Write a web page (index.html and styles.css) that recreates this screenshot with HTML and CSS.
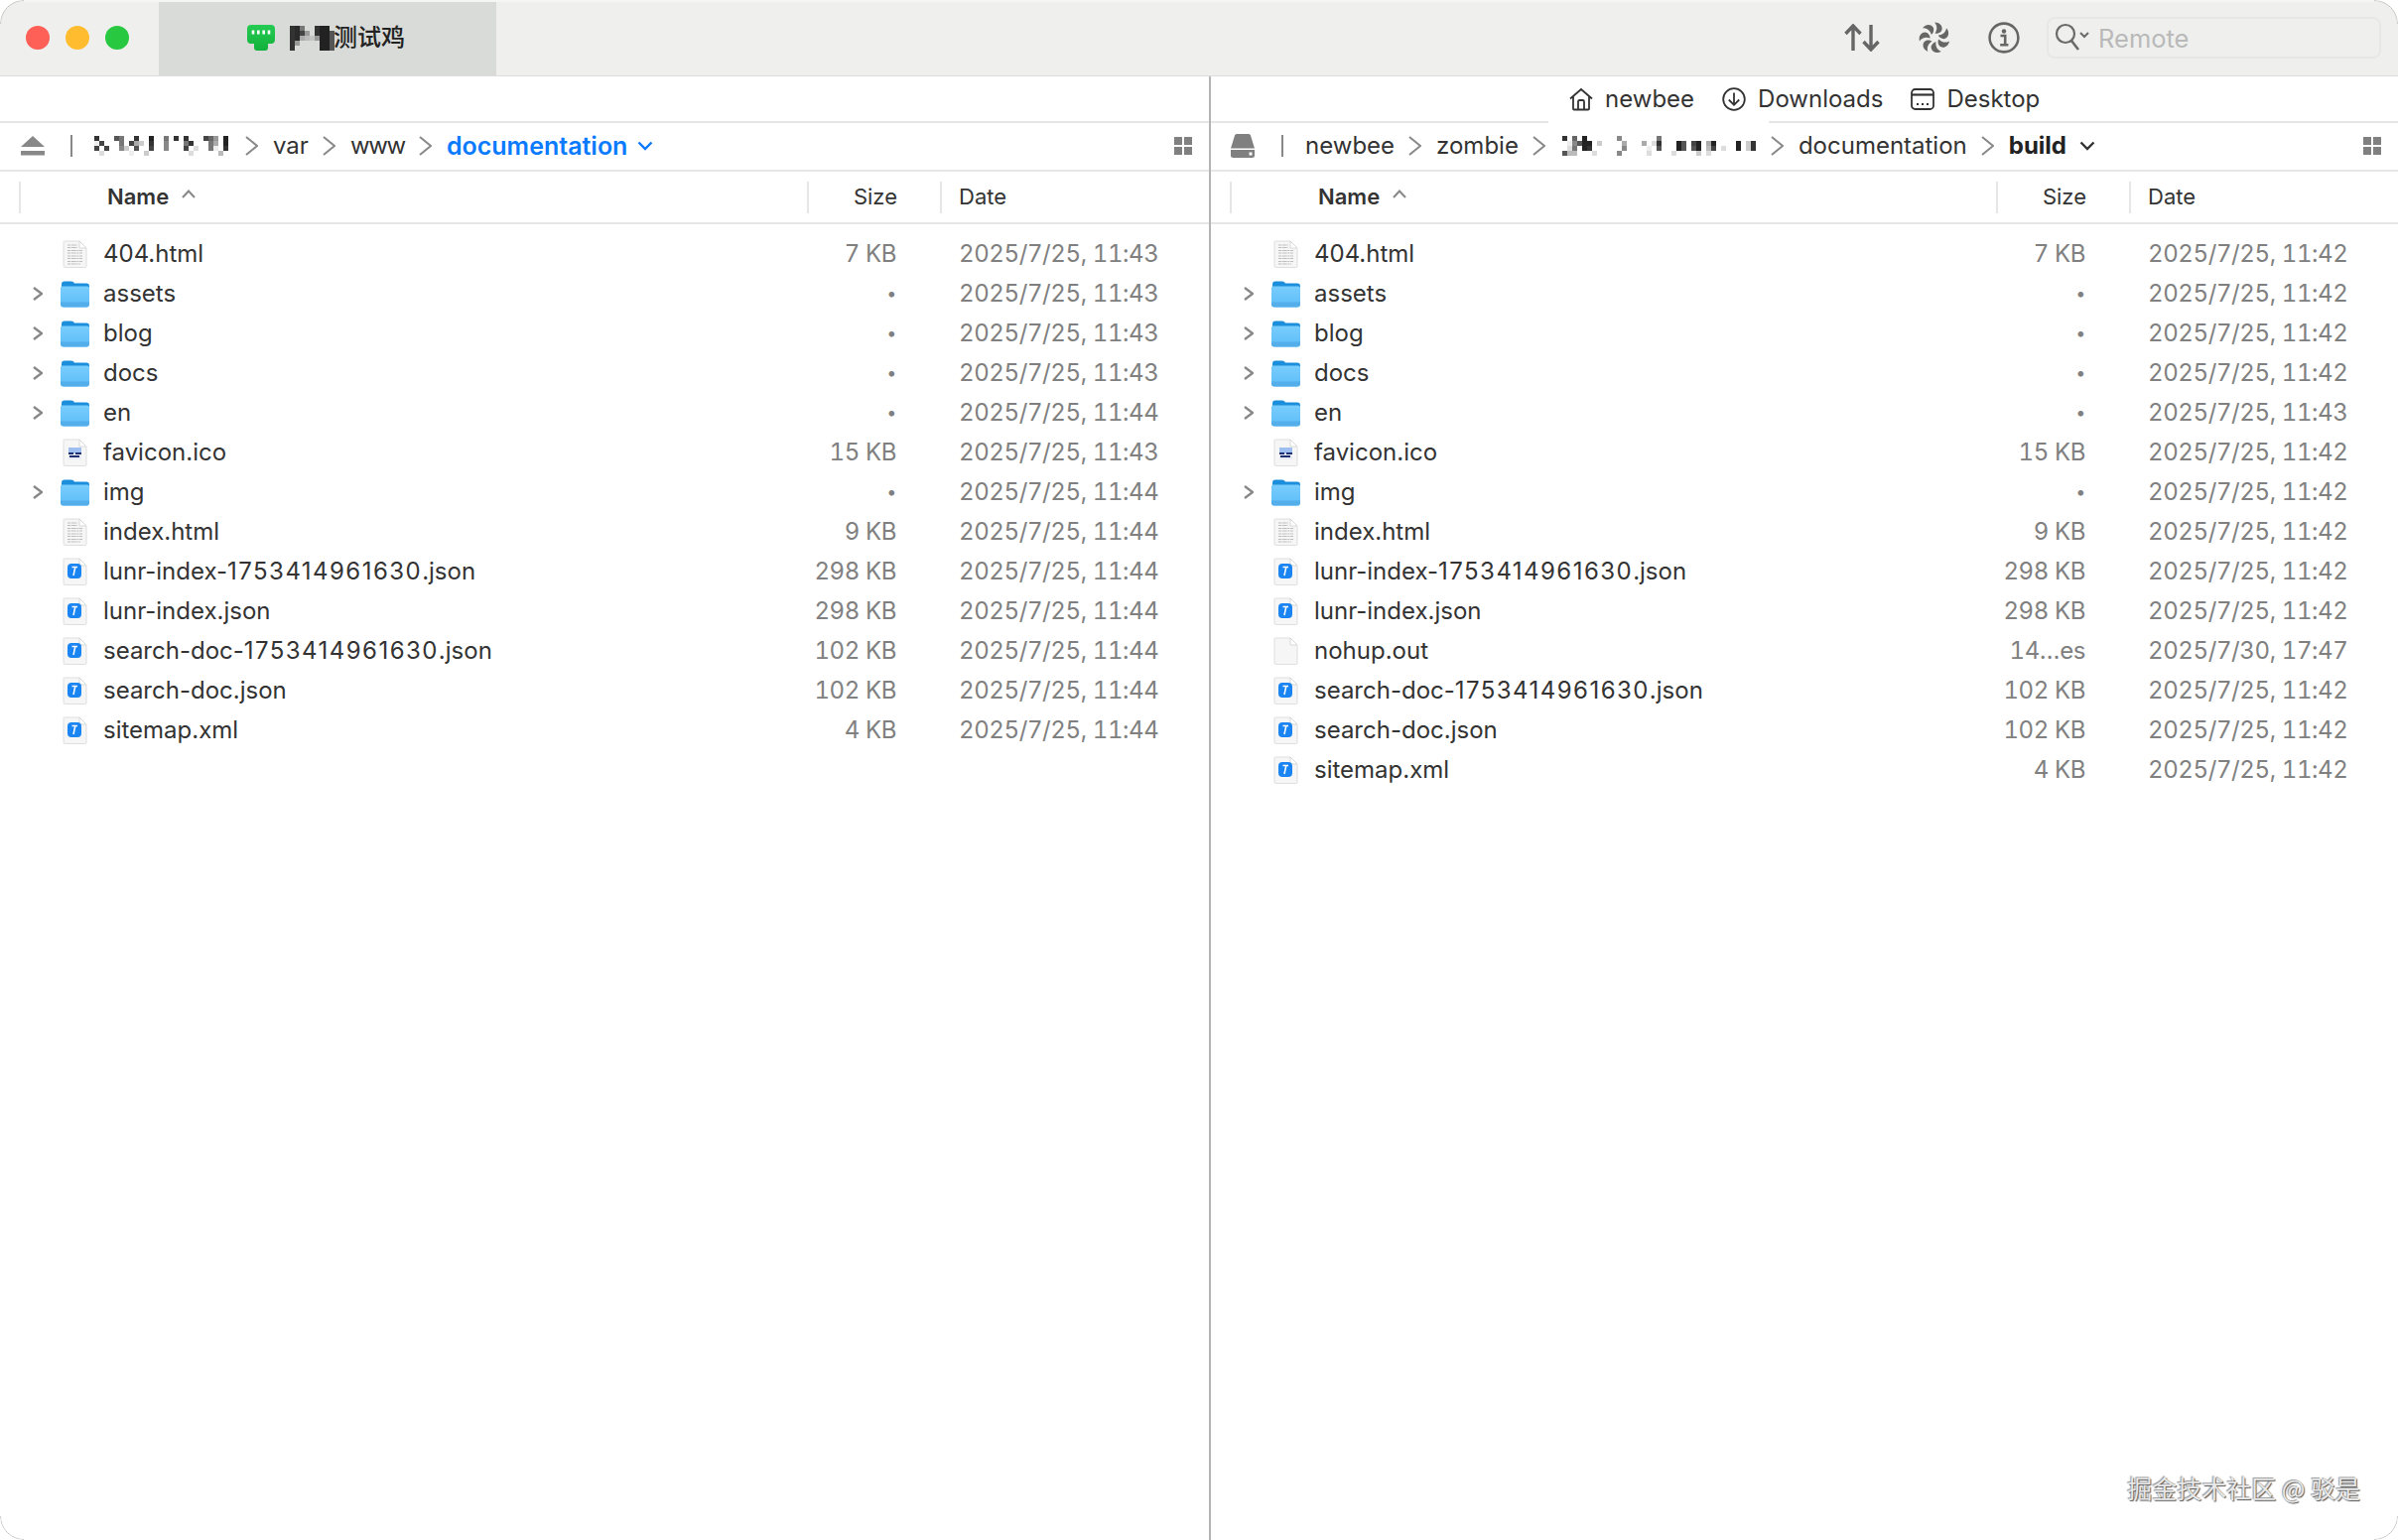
FILE: index.html
```html
<!DOCTYPE html>
<html lang="en">
<head>
<meta charset="utf-8">
<title>Transmit</title>
<link rel="stylesheet" href="styles.css">
</head>
<body>
<svg class="defs" aria-hidden="true">
  <defs>
    <linearGradient id="fb" x1="0" y1="0" x2="0" y2="1"><stop offset="0" stop-color="#79cdfd"/><stop offset="1" stop-color="#5cbcf8"/></linearGradient>
    <linearGradient id="gr" x1="0" y1="0" x2="0" y2="1"><stop offset="0" stop-color="#25cb52"/><stop offset="1" stop-color="#12b03c"/></linearGradient>
  </defs>
  <symbol id="chev" viewBox="0 0 10 14"><path d="M1 1 L9 7 L1 13" fill="none" stroke="#888" stroke-width="2.4"/></symbol>
  <symbol id="folder" viewBox="0 0 29 27">
    <path d="M1 4 Q1 1 4 1 H11 Q13 1 14 3 H26 Q29 3 29 6 V12 H1Z" fill="#1c8fdc"/>
    <path d="M0 7.5 Q0 6 2 6 H27 Q29 6 29 7.5 V24 Q29 27 26 27 H3 Q0 27 0 24Z" fill="url(#fb)"/>
    <path d="M0 22 H29 V24 Q29 27 26 27 H3 Q0 27 0 24Z" fill="#53aeea"/>
  </symbol>
  <symbol id="page" viewBox="0 0 25 28">
    <path d="M1.5 1 H17 L24 8 V26 Q24 27.5 22.5 27.5 H2.5 Q1 27.5 1 26 V1.5Z" fill="#f6f6f6" stroke="#dedede" stroke-width="1"/>
    <path d="M17 1 V8 H24Z" fill="#fff" stroke="#d8d8d8" stroke-width="1"/>
  </symbol>
  <symbol id="doc" viewBox="0 0 25 28">
    <use href="#page" width="25" height="28"/>
    <path d="M5 5 H15 M5 7.5 H15 M5 10.5 H20 M5 13 H20 M5 16 H20 M5 18.5 H20 M5 21.5 H20 M5 24 H18" stroke="#bdbdbd" stroke-width="1.2" stroke-dasharray="3 .7 5 .7 2 .7 4 .7"/>
  </symbol>
  <symbol id="ico" viewBox="0 0 25 28">
    <use href="#page" width="25" height="28"/>
    <rect x="6" y="9" width="13" height="6" fill="#9fbff0"/>
    <rect x="6" y="15" width="13" height="6" fill="#e9edf8"/>
    <path d="M6 15 H11 M13 15 H19 M7 18 H17" stroke="#1f2f70" stroke-width="2"/>
  </symbol>
  <symbol id="json" viewBox="0 0 25 28">
    <use href="#page" width="25" height="28"/>
    <rect x="5" y="6" width="14" height="15" rx="4" fill="#1b84f3"/>
    <path d="M9.5 9.5 H15 M12.8 9.5 L11 18" stroke="#fff" stroke-width="1.5" fill="none"/>
  </symbol>
  <symbol id="eject" viewBox="0 0 24 20"><path d="M12 0 L24 11 H0Z" fill="#888"/><rect y="15" width="24" height="4.5" fill="#888"/></symbol>
  <symbol id="drive" viewBox="0 0 24 24">
    <path d="M4 1.5 Q4.3 0 6 0 H18 Q19.7 0 20 1.5 L24 14.5 H0Z" fill="#808080"/>
    <path d="M0 16 H24 V21.5 Q24 24 21.5 24 H2.5 Q0 24 0 21.5Z" fill="#808080"/>
    <rect x="18.5" y="18.5" width="3" height="3" fill="#fff"/>
  </symbol>
  <symbol id="grid" viewBox="0 0 18 18"><path d="M0 0h8v8H0zM10 0h8v8h-8zM0 10h8v8H0zM10 10h8v8h-8z" fill="#808080"/></symbol>
  <symbol id="blade" viewBox="-16 -16 32 32"><path d="M0.5 -4.5 C3 -8 3 -12 0 -15.5 C5 -15.5 8.5 -12 7.5 -8 C7 -5.5 3 -3.5 0.5 -4.5Z" fill="#666"/></symbol>
</svg>

<div class="window">
  <header class="titlebar">
    <div class="lights"><span class="light red"></span><span class="light yellow"></span><span class="light green"></span></div>
    <div class="tab">
      <svg class="plug" viewBox="0 0 28 26"><path d="M4 0 H24 Q28 0 28 4 V15 Q28 19 24 19 H21 V23 Q21 26 18 26 H10 Q7 26 7 23 V19 H4 Q0 19 0 15 V4 Q0 0 4 0Z" fill="url(#gr)"/><path d="M6 5.5 V9.5 M11.3 5.5 V9.5 M16.7 5.5 V9.5 M22 5.5 V9.5" stroke="#fff" stroke-width="2.6"/></svg>
      <svg class="title-mosaic" viewBox="0 0 9 5" shape-rendering="crispEdges">
        <rect x="0" y="0" width="1" height="5" fill="#333"/><rect x="1" y="0" width="1" height="3" fill="#2a2a2a"/><rect x="1" y="3" width="1" height="1" fill="#999"/><rect x="2" y="0" width="1" height="1" fill="#777"/><rect x="2" y="1" width="1" height="1" fill="#444"/><rect x="2" y="2" width="1" height="1" fill="#aaa"/><rect x="3" y="1" width="1" height="1" fill="#999"/><rect x="3" y="2" width="1" height="1" fill="#bbb"/><rect x="4" y="2" width="1" height="1" fill="#c4c4c4"/><rect x="5" y="2" width="1" height="1" fill="#999"/><rect x="5" y="0" width="1" height="2" fill="#333"/><rect x="6" y="0" width="2" height="5" fill="#222"/><rect x="8" y="1" width="1" height="4" fill="#555"/>
      </svg>
      <span class="title-text">测试鸡</span>
    </div>
    <div class="tools">
      <svg class="tool-arrows" viewBox="0 0 36 28"><path d="M9 27 V2 M1.5 10 L9 2 L16.5 10 M27 1 V26 M19.5 18 L27 26 L34.5 18" fill="none" stroke="#666" stroke-width="3.4"/></svg>
      <svg class="tool-wheel" viewBox="-16 -16 32 32">
        <use href="#blade" x="-16" y="-16" width="32" height="32"/>
        <use href="#blade" x="-16" y="-16" width="32" height="32" transform="rotate(51.4)"/>
        <use href="#blade" x="-16" y="-16" width="32" height="32" transform="rotate(102.8)"/>
        <use href="#blade" x="-16" y="-16" width="32" height="32" transform="rotate(154.2)"/>
        <use href="#blade" x="-16" y="-16" width="32" height="32" transform="rotate(205.7)"/>
        <use href="#blade" x="-16" y="-16" width="32" height="32" transform="rotate(257.1)"/>
        <use href="#blade" x="-16" y="-16" width="32" height="32" transform="rotate(308.5)"/>
      </svg>
      <svg class="tool-info" viewBox="0 0 32 32"><circle cx="16" cy="16" r="14.4" fill="none" stroke="#666" stroke-width="2.6"/><circle cx="16" cy="9.5" r="2.2" fill="#666"/><path d="M12.5 14 H17.2 V22.5 M12.2 23.2 H20.4" fill="none" stroke="#666" stroke-width="2.6"/></svg>
      <div class="search">
        <svg class="search-icon" viewBox="0 0 36 30"><circle cx="12" cy="11" r="9" fill="none" stroke="#6a6a6a" stroke-width="2.2"/><path d="M18 18 L25 27" stroke="#6a6a6a" stroke-width="2.6"/><path d="M27 10 L31 14 L35 10" fill="none" stroke="#6a6a6a" stroke-width="2"/></svg>
        <span class="search-text">Remote</span>
      </div>
    </div>
  </header>

  <main class="panes">
    <section class="pane pane-left">
      <div class="topbar"></div>
      <div class="pathbar">
        <svg class="vol-icon eject"><use href="#eject"/></svg>
        <span class="path-sep"></span>
        <svg class="mosaic mosaic-left" viewBox="0 0 27 4" shape-rendering="crispEdges">
          <rect x="0" y="0" width="1" height="1" fill="#333"/><rect x="4" y="0" width="1" height="1" fill="#555"/><rect x="5" y="0" width="1" height="1" fill="#777"/><rect x="8" y="0" width="1" height="1" fill="#333"/><rect x="11" y="0" width="1" height="1" fill="#222"/><rect x="14" y="0" width="1" height="1" fill="#777"/><rect x="16" y="0" width="1" height="1" fill="#333"/><rect x="18" y="0" width="1" height="1" fill="#333"/><rect x="22" y="0" width="1" height="1" fill="#444"/><rect x="23" y="0" width="1" height="1" fill="#666"/><rect x="24" y="0" width="1" height="1" fill="#999"/><rect x="26" y="0" width="1" height="1" fill="#222"/>
          <rect x="0" y="1" width="1" height="1" fill="#eee"/><rect x="1" y="1" width="1" height="1" fill="#444"/><rect x="5" y="1" width="1" height="1" fill="#777"/><rect x="7" y="1" width="1" height="1" fill="#444"/><rect x="8" y="1" width="1" height="1" fill="#aaa"/><rect x="9" y="1" width="1" height="1" fill="#ccc"/><rect x="11" y="1" width="1" height="1" fill="#333"/><rect x="14" y="1" width="1" height="1" fill="#888"/><rect x="18" y="1" width="1" height="1" fill="#777"/><rect x="19" y="1" width="1" height="1" fill="#333"/><rect x="23" y="1" width="1" height="1" fill="#777"/><rect x="24" y="1" width="1" height="1" fill="#aaa"/><rect x="26" y="1" width="1" height="1" fill="#222"/>
          <rect x="0" y="2" width="1" height="1" fill="#444"/><rect x="2" y="2" width="1" height="1" fill="#444"/><rect x="5" y="2" width="1" height="1" fill="#888"/><rect x="6" y="2" width="1" height="1" fill="#ccc"/><rect x="8" y="2" width="1" height="1" fill="#555"/><rect x="11" y="2" width="1" height="1" fill="#444"/><rect x="14" y="2" width="1" height="1" fill="#888"/><rect x="18" y="2" width="1" height="1" fill="#444"/><rect x="20" y="2" width="1" height="1" fill="#ddd"/><rect x="23" y="2" width="1" height="1" fill="#777"/><rect x="24" y="2" width="1" height="1" fill="#eee"/><rect x="26" y="2" width="1" height="1" fill="#333"/>
          <rect x="1" y="3" width="1" height="1" fill="#ddd"/><rect x="7" y="3" width="1" height="1" fill="#eee"/><rect x="10" y="3" width="1" height="1" fill="#ccc"/><rect x="19" y="3" width="1" height="1" fill="#ddd"/><rect x="25" y="3" width="1" height="1" fill="#bbb"/>
        </svg>
        <svg class="crumb-chev" viewBox="0 0 13 20"><path d="M1 1 L12 10 L1 19" fill="none" stroke="#888" stroke-width="2"/></svg>
        <span class="crumb">var</span>
        <svg class="crumb-chev" viewBox="0 0 13 20"><path d="M1 1 L12 10 L1 19" fill="none" stroke="#888" stroke-width="2"/></svg>
        <span class="crumb crumb-tight">www</span>
        <svg class="crumb-chev" viewBox="0 0 13 20"><path d="M1 1 L12 10 L1 19" fill="none" stroke="#888" stroke-width="2"/></svg>
        <span class="crumb crumb-active">documentation</span>
        <svg class="crumb-down" viewBox="0 0 16 10"><path d="M1.5 1.5 L8 8 L14.5 1.5" fill="none" stroke="#0a7aff" stroke-width="2.4"/></svg>
        <svg class="grid-icon"><use href="#grid"/></svg>
      </div>
      <div class="row-grid head">
        <div class="col-name"><span class="head-name">Name</span><svg class="sort" viewBox="0 0 14 9"><path d="M1 8 L7 1.5 L13 8" fill="none" stroke="#888" stroke-width="2"/></svg></div>
        <div class="col-size">Size</div>
        <div class="col-date">Date</div>
      </div>
      <div class="list">
        <div class="row-grid row"><div class="col-name"><span class="slot"></span><svg class="ficon"><use href="#doc"/></svg><span class="fname">404.html</span></div><div class="col-size">7 KB</div><div class="col-date">2025/7/25, 11:43</div></div>
        <div class="row-grid row"><div class="col-name"><svg class="slot"><use href="#chev"/></svg><svg class="ficon"><use href="#folder"/></svg><span class="fname">assets</span></div><div class="col-size dot">•</div><div class="col-date">2025/7/25, 11:43</div></div>
        <div class="row-grid row"><div class="col-name"><svg class="slot"><use href="#chev"/></svg><svg class="ficon"><use href="#folder"/></svg><span class="fname">blog</span></div><div class="col-size dot">•</div><div class="col-date">2025/7/25, 11:43</div></div>
        <div class="row-grid row"><div class="col-name"><svg class="slot"><use href="#chev"/></svg><svg class="ficon"><use href="#folder"/></svg><span class="fname">docs</span></div><div class="col-size dot">•</div><div class="col-date">2025/7/25, 11:43</div></div>
        <div class="row-grid row"><div class="col-name"><svg class="slot"><use href="#chev"/></svg><svg class="ficon"><use href="#folder"/></svg><span class="fname">en</span></div><div class="col-size dot">•</div><div class="col-date">2025/7/25, 11:44</div></div>
        <div class="row-grid row"><div class="col-name"><span class="slot"></span><svg class="ficon"><use href="#ico"/></svg><span class="fname">favicon.ico</span></div><div class="col-size">15 KB</div><div class="col-date">2025/7/25, 11:43</div></div>
        <div class="row-grid row"><div class="col-name"><svg class="slot"><use href="#chev"/></svg><svg class="ficon"><use href="#folder"/></svg><span class="fname">img</span></div><div class="col-size dot">•</div><div class="col-date">2025/7/25, 11:44</div></div>
        <div class="row-grid row"><div class="col-name"><span class="slot"></span><svg class="ficon"><use href="#doc"/></svg><span class="fname">index.html</span></div><div class="col-size">9 KB</div><div class="col-date">2025/7/25, 11:44</div></div>
        <div class="row-grid row"><div class="col-name"><span class="slot"></span><svg class="ficon"><use href="#json"/></svg><span class="fname">lunr-index-<span class="digits">1753414961630</span>.json</span></div><div class="col-size">298 KB</div><div class="col-date">2025/7/25, 11:44</div></div>
        <div class="row-grid row"><div class="col-name"><span class="slot"></span><svg class="ficon"><use href="#json"/></svg><span class="fname">lunr-index.json</span></div><div class="col-size">298 KB</div><div class="col-date">2025/7/25, 11:44</div></div>
        <div class="row-grid row"><div class="col-name"><span class="slot"></span><svg class="ficon"><use href="#json"/></svg><span class="fname">search-doc-<span class="digits">1753414961630</span>.json</span></div><div class="col-size">102 KB</div><div class="col-date">2025/7/25, 11:44</div></div>
        <div class="row-grid row"><div class="col-name"><span class="slot"></span><svg class="ficon"><use href="#json"/></svg><span class="fname">search-doc.json</span></div><div class="col-size">102 KB</div><div class="col-date">2025/7/25, 11:44</div></div>
        <div class="row-grid row"><div class="col-name"><span class="slot"></span><svg class="ficon"><use href="#json"/></svg><span class="fname">sitemap.xml</span></div><div class="col-size">4 KB</div><div class="col-date">2025/7/25, 11:44</div></div>
      </div>
    </section>

    <section class="pane pane-right">
      <div class="topbar">
        <nav class="bookmarks">
          <span class="bookmark"><svg class="bm-icon" viewBox="0 0 24 24"><path d="M1 11.5 L12 2 L23 11.5 M4 9.5 V21.5 Q4 22.5 5 22.5 H19 Q20 22.5 20 21.5 V9.5 M9 22 V14.5 Q9 13 10.5 13 H13.5 Q15 13 15 14.5 V22" fill="none" stroke="#333" stroke-width="1.8"/></svg>newbee</span>
          <span class="bookmark"><svg class="bm-icon" viewBox="0 0 24 24"><circle cx="12" cy="12" r="10.8" fill="none" stroke="#333" stroke-width="1.8"/><path d="M12 5.5 V17.5 M6.8 12.5 L12 17.8 L17.2 12.5" fill="none" stroke="#333" stroke-width="1.8"/></svg>Downloads</span>
          <span class="bookmark"><svg class="bm-icon" viewBox="0 0 24 24"><rect x="1" y="2" width="22" height="20" rx="3.5" fill="none" stroke="#333" stroke-width="1.8"/><path d="M1 7.5 H23" stroke="#333" stroke-width="2.2"/><path d="M6 17 H8 M11 17 H13 M16 17 H18" stroke="#333" stroke-width="2"/></svg>Desktop</span>
        </nav>
      </div>
      <div class="pathbar">
        <svg class="vol-icon drive"><use href="#drive"/></svg>
        <span class="path-sep"></span>
        <span class="crumb">newbee</span>
        <svg class="crumb-chev" viewBox="0 0 13 20"><path d="M1 1 L12 10 L1 19" fill="none" stroke="#888" stroke-width="2"/></svg>
        <span class="crumb">zombie</span>
        <svg class="crumb-chev" viewBox="0 0 13 20"><path d="M1 1 L12 10 L1 19" fill="none" stroke="#888" stroke-width="2"/></svg>
        <svg class="mosaic mosaic-right" viewBox="0 0 39 4" shape-rendering="crispEdges">
          <rect x="0" y="0" width="1" height="1" fill="#333"/><rect x="2" y="0" width="1" height="1" fill="#666"/><rect x="4" y="0" width="1" height="1" fill="#222"/><rect x="11" y="0" width="1" height="1" fill="#888"/><rect x="19" y="0" width="1" height="1" fill="#777"/>
          <rect x="1" y="1" width="1" height="1" fill="#eee"/><rect x="2" y="1" width="1" height="1" fill="#888"/><rect x="3" y="1" width="1" height="1" fill="#555"/><rect x="4" y="1" width="1" height="1" fill="#222"/><rect x="5" y="1" width="1" height="1" fill="#222"/><rect x="7" y="1" width="1" height="1" fill="#ccc"/><rect x="12" y="1" width="1" height="1" fill="#aaa"/><rect x="16" y="1" width="1" height="1" fill="#aaa"/><rect x="18" y="1" width="1" height="1" fill="#ddd"/><rect x="19" y="1" width="1" height="1" fill="#333"/><rect x="23" y="1" width="1" height="1" fill="#222"/><rect x="24" y="1" width="1" height="1" fill="#555"/><rect x="26" y="1" width="1" height="1" fill="#444"/><rect x="27" y="1" width="1" height="1" fill="#222"/><rect x="29" y="1" width="1" height="1" fill="#aaa"/><rect x="30" y="1" width="1" height="1" fill="#222"/><rect x="35" y="1" width="1" height="1" fill="#222"/><rect x="37" y="1" width="1" height="1" fill="#ccc"/><rect x="38" y="1" width="1" height="1" fill="#333"/>
          <rect x="1" y="2" width="1" height="1" fill="#ddd"/><rect x="2" y="2" width="1" height="1" fill="#777"/><rect x="4" y="2" width="1" height="1" fill="#222"/><rect x="5" y="2" width="1" height="1" fill="#333"/><rect x="12" y="2" width="1" height="1" fill="#888"/><rect x="17" y="2" width="1" height="1" fill="#eee"/><rect x="19" y="2" width="1" height="1" fill="#555"/><rect x="23" y="2" width="1" height="1" fill="#222"/><rect x="24" y="2" width="1" height="1" fill="#555"/><rect x="26" y="2" width="1" height="1" fill="#555"/><rect x="27" y="2" width="1" height="1" fill="#222"/><rect x="29" y="2" width="1" height="1" fill="#bbb"/><rect x="30" y="2" width="1" height="1" fill="#444"/><rect x="32" y="2" width="1" height="1" fill="#ddd"/><rect x="35" y="2" width="1" height="1" fill="#222"/><rect x="37" y="2" width="1" height="1" fill="#ccc"/><rect x="38" y="2" width="1" height="1" fill="#333"/>
          <rect x="0" y="3" width="1" height="1" fill="#555"/><rect x="1" y="3" width="1" height="1" fill="#bbb"/><rect x="2" y="3" width="1" height="1" fill="#bbb"/><rect x="6" y="3" width="1" height="1" fill="#ddd"/><rect x="11" y="3" width="1" height="1" fill="#888"/><rect x="17" y="3" width="1" height="1" fill="#ddd"/><rect x="22" y="3" width="1" height="1" fill="#ddd"/><rect x="27" y="3" width="1" height="1" fill="#ccc"/><rect x="29" y="3" width="1" height="1" fill="#ddd"/>
        </svg>
        <svg class="crumb-chev" viewBox="0 0 13 20"><path d="M1 1 L12 10 L1 19" fill="none" stroke="#888" stroke-width="2"/></svg>
        <span class="crumb">documentation</span>
        <svg class="crumb-chev" viewBox="0 0 13 20"><path d="M1 1 L12 10 L1 19" fill="none" stroke="#888" stroke-width="2"/></svg>
        <span class="crumb crumb-bold">build</span>
        <svg class="crumb-down" viewBox="0 0 16 10"><path d="M1.5 1.5 L8 8 L14.5 1.5" fill="none" stroke="#333" stroke-width="2.4"/></svg>
        <svg class="grid-icon"><use href="#grid"/></svg>
      </div>
      <div class="row-grid head">
        <div class="col-name"><span class="head-name">Name</span><svg class="sort" viewBox="0 0 14 9"><path d="M1 8 L7 1.5 L13 8" fill="none" stroke="#888" stroke-width="2"/></svg></div>
        <div class="col-size">Size</div>
        <div class="col-date">Date</div>
      </div>
      <div class="list">
        <div class="row-grid row"><div class="col-name"><span class="slot"></span><svg class="ficon"><use href="#doc"/></svg><span class="fname">404.html</span></div><div class="col-size">7 KB</div><div class="col-date">2025/7/25, 11:42</div></div>
        <div class="row-grid row"><div class="col-name"><svg class="slot"><use href="#chev"/></svg><svg class="ficon"><use href="#folder"/></svg><span class="fname">assets</span></div><div class="col-size dot">•</div><div class="col-date">2025/7/25, 11:42</div></div>
        <div class="row-grid row"><div class="col-name"><svg class="slot"><use href="#chev"/></svg><svg class="ficon"><use href="#folder"/></svg><span class="fname">blog</span></div><div class="col-size dot">•</div><div class="col-date">2025/7/25, 11:42</div></div>
        <div class="row-grid row"><div class="col-name"><svg class="slot"><use href="#chev"/></svg><svg class="ficon"><use href="#folder"/></svg><span class="fname">docs</span></div><div class="col-size dot">•</div><div class="col-date">2025/7/25, 11:42</div></div>
        <div class="row-grid row"><div class="col-name"><svg class="slot"><use href="#chev"/></svg><svg class="ficon"><use href="#folder"/></svg><span class="fname">en</span></div><div class="col-size dot">•</div><div class="col-date">2025/7/25, 11:43</div></div>
        <div class="row-grid row"><div class="col-name"><span class="slot"></span><svg class="ficon"><use href="#ico"/></svg><span class="fname">favicon.ico</span></div><div class="col-size">15 KB</div><div class="col-date">2025/7/25, 11:42</div></div>
        <div class="row-grid row"><div class="col-name"><svg class="slot"><use href="#chev"/></svg><svg class="ficon"><use href="#folder"/></svg><span class="fname">img</span></div><div class="col-size dot">•</div><div class="col-date">2025/7/25, 11:42</div></div>
        <div class="row-grid row"><div class="col-name"><span class="slot"></span><svg class="ficon"><use href="#doc"/></svg><span class="fname">index.html</span></div><div class="col-size">9 KB</div><div class="col-date">2025/7/25, 11:42</div></div>
        <div class="row-grid row"><div class="col-name"><span class="slot"></span><svg class="ficon"><use href="#json"/></svg><span class="fname">lunr-index-<span class="digits">1753414961630</span>.json</span></div><div class="col-size">298 KB</div><div class="col-date">2025/7/25, 11:42</div></div>
        <div class="row-grid row"><div class="col-name"><span class="slot"></span><svg class="ficon"><use href="#json"/></svg><span class="fname">lunr-index.json</span></div><div class="col-size">298 KB</div><div class="col-date">2025/7/25, 11:42</div></div>
        <div class="row-grid row"><div class="col-name"><span class="slot"></span><svg class="ficon"><use href="#page"/></svg><span class="fname">nohup.out</span></div><div class="col-size">14…es</div><div class="col-date">2025/7/30, 17:47</div></div>
        <div class="row-grid row"><div class="col-name"><span class="slot"></span><svg class="ficon"><use href="#json"/></svg><span class="fname">search-doc-<span class="digits">1753414961630</span>.json</span></div><div class="col-size">102 KB</div><div class="col-date">2025/7/25, 11:42</div></div>
        <div class="row-grid row"><div class="col-name"><span class="slot"></span><svg class="ficon"><use href="#json"/></svg><span class="fname">search-doc.json</span></div><div class="col-size">102 KB</div><div class="col-date">2025/7/25, 11:42</div></div>
        <div class="row-grid row"><div class="col-name"><span class="slot"></span><svg class="ficon"><use href="#json"/></svg><span class="fname">sitemap.xml</span></div><div class="col-size">4 KB</div><div class="col-date">2025/7/25, 11:42</div></div>
      </div>
    </section>
  </main>
  <div class="watermark">掘金技术社区 @ 驳是</div>
</div>
</body>
</html>
```

FILE: styles.css
```css
* { box-sizing: border-box; }
html, body { margin: 0; height: 100%; }
body {
  background: #fff;
  color: #333;
  font-family: "Inter", "Noto Sans CJK SC", sans-serif;
  font-size: 24px;
  overflow: hidden;
}
.defs { position: absolute; width: 0; height: 0; }

.window {
  position: relative;
  height: 1552px;
  display: flex;
  flex-direction: column;
  border-radius: 24px;
  overflow: hidden;
  background: #fff;
}
/* the hairline outline only shows at the rounded corners */
.window::after {
  content: "";
  position: absolute;
  inset: 0;
  border: 1px solid #c4c4c4;
  border-radius: 24px;
  pointer-events: none;
  -webkit-mask:
    linear-gradient(#000 0 0) top left / 24px 24px no-repeat,
    linear-gradient(#000 0 0) top right / 24px 24px no-repeat,
    linear-gradient(#000 0 0) bottom left / 24px 24px no-repeat,
    linear-gradient(#000 0 0) bottom right / 24px 24px no-repeat;
  mask:
    linear-gradient(#000 0 0) top left / 24px 24px no-repeat,
    linear-gradient(#000 0 0) top right / 24px 24px no-repeat,
    linear-gradient(#000 0 0) bottom left / 24px 24px no-repeat,
    linear-gradient(#000 0 0) bottom right / 24px 24px no-repeat;
}

/* title bar */
.titlebar {
  height: 77px;
  flex: none;
  display: flex;
  background: #eff0ee;
  border-top: 2px solid #f5f6f4;
  border-bottom: 1px solid #dcdcdc;
}
.lights { display: flex; align-items: center; gap: 16px; padding-left: 26px; width: 160px; flex: none; padding-bottom: 2px; }
.light { width: 24px; height: 24px; border-radius: 50%; }
.red { background: #fe5f57; }
.yellow { background: #febc2e; }
.green { background: #28c840; }
.tab {
  width: 340px;
  background: #d9dbd8;
  display: flex;
  align-items: center;
  padding: 0 0 2px 89px;
}
.plug { width: 28px; height: 26px; flex: none; }
.title-mosaic { width: 45px; height: 25px; margin-left: 15px; flex: none; }
.title-text { font-size: 24px; font-weight: 500; color: #222; margin-left: -1px; line-height: 1; }
.tools { margin-left: auto; display: flex; align-items: center; padding: 0 17px 2px 0; }
.tool-arrows { width: 36px; height: 28px; margin-right: 39px; }
.tool-wheel { width: 32px; height: 32px; margin-right: 38px; }
.tool-info { width: 32px; height: 32px; margin-right: 27px; }
.search {
  width: 337px;
  height: 42px;
  border: 2px solid #e7e8e6;
  border-radius: 8px;
  display: flex;
  align-items: center;
  padding-left: 5px;
}
.search-icon { width: 36px; height: 30px; flex: none; }
.search-text { margin-left: 9px; color: #b9b9b9; font-size: 25.5px; }

/* panes */
.panes { flex: 1; display: flex; min-height: 0; }
.pane { min-width: 0; display: flex; flex-direction: column; }
.pane-left { width: 1220px; border-right: 2px solid #b4b4b4; --name: 813px; }
.pane-right { flex: 1; --name: 791px; }

.topbar {
  height: 47px;
  flex: none;
  border-bottom: 2px solid #e6e6e6;
  display: flex;
  justify-content: flex-end;
  padding-right: 634px;
}
.bookmarks {
  width: 222px;
  height: 47px;
  background: #fff;
  display: flex;
  align-items: flex-start;
  white-space: nowrap;
  padding: 10px 0 0 21px;
}
.bookmark { display: inline-flex; align-items: center; gap: 12px; font-size: 24px; color: #333; line-height: 26px; flex: none; }
.bookmark + .bookmark { margin-left: 28px; }
.bm-icon { width: 24px; height: 24px; flex: none; }

.pathbar {
  height: 49px;
  flex: none;
  border-bottom: 2px solid #e6e6e6;
  display: flex;
  align-items: center;
  padding: 0 17px 2px 21px;
}
.vol-icon { width: 24px; height: 24px; flex: none; }
.eject { height: 20px; }
.drive { margin-left: -1px; margin-right: 1px; }
.path-sep { width: 2px; height: 22px; background: #888; margin: 0 22px 0 26px; flex: none; }
.mosaic { height: 20px; flex: none; }
.mosaic-left { width: 135px; margin-right: 3px; }
.mosaic-right { width: 195px; margin: 0 1px 0 2px; }
.crumb-chev { width: 13px; height: 20px; margin: 0 15px 0 14px; flex: none; }
.crumb { font-size: 24px; color: #333; white-space: nowrap; line-height: 30px; }
.crumb-tight { letter-spacing: -1.3px; }
.crumb-active { color: #0a7aff; font-weight: 600; font-size: 25px; }
.crumb-bold { font-weight: 700; color: #222; }
.crumb-down { width: 16px; height: 10px; margin-left: 13px; flex: none; }
.crumb-active + .crumb-down { margin-left: 10px; }
.grid-icon { width: 18px; height: 18px; margin-left: auto; flex: none; }

/* columns */
.row-grid { display: grid; grid-template-columns: var(--name) 134px 1fr; align-items: center; }
.head {
  height: 53px;
  flex: none;
  border-bottom: 2px solid #e6e6e6;
  font-size: 22px;
  color: #333;
}
.head .col-name,
.head .col-size,
.head .col-date { height: 32px; display: flex; align-items: center; padding-bottom: 2px; }
.head .col-name { margin-left: 19px; border-left: 2px solid #e6e6e6; padding-left: 87px; gap: 13px; }
.head .col-size { border-left: 2px solid #e6e6e6; justify-content: flex-end; padding-right: 43px; }
.head .col-date { border-left: 2px solid #e6e6e6; padding-left: 17px; }
.head-name { font-weight: 600; }
.sort { width: 14px; height: 9px; margin-top: -4px; }

.list { padding-top: 9px; }
.row { height: 40px; font-size: 24px; }
.row .col-name { display: flex; align-items: center; padding-left: 33px; }
.slot { width: 10px; height: 14px; flex: none; margin-top: 2px; }
.ficon { width: 29px; height: 28px; margin: 2px 0 0 18px; flex: none; }
.fname { margin-left: 14px; color: #333; white-space: nowrap; }
.digits { letter-spacing: 1.45px; }
.row .col-size,
.row .col-date { font-feature-settings: "tnum"; letter-spacing: -0.4px; color: #808080; }
.row .col-size { text-align: right; padding-right: 44px; }
.row .col-date { padding-left: 19px; }
.row .dot { font-size: 18px; }

.watermark {
  position: absolute;
  right: 38px;
  bottom: 39px;
  font-family: "Noto Sans CJK SC", sans-serif;
  font-size: 25px;
  line-height: 28px;
  color: #e8e8e8;
  text-shadow: 1px 1px 1px #555, -1px -1px 1px #999;
  white-space: nowrap;
}
```
